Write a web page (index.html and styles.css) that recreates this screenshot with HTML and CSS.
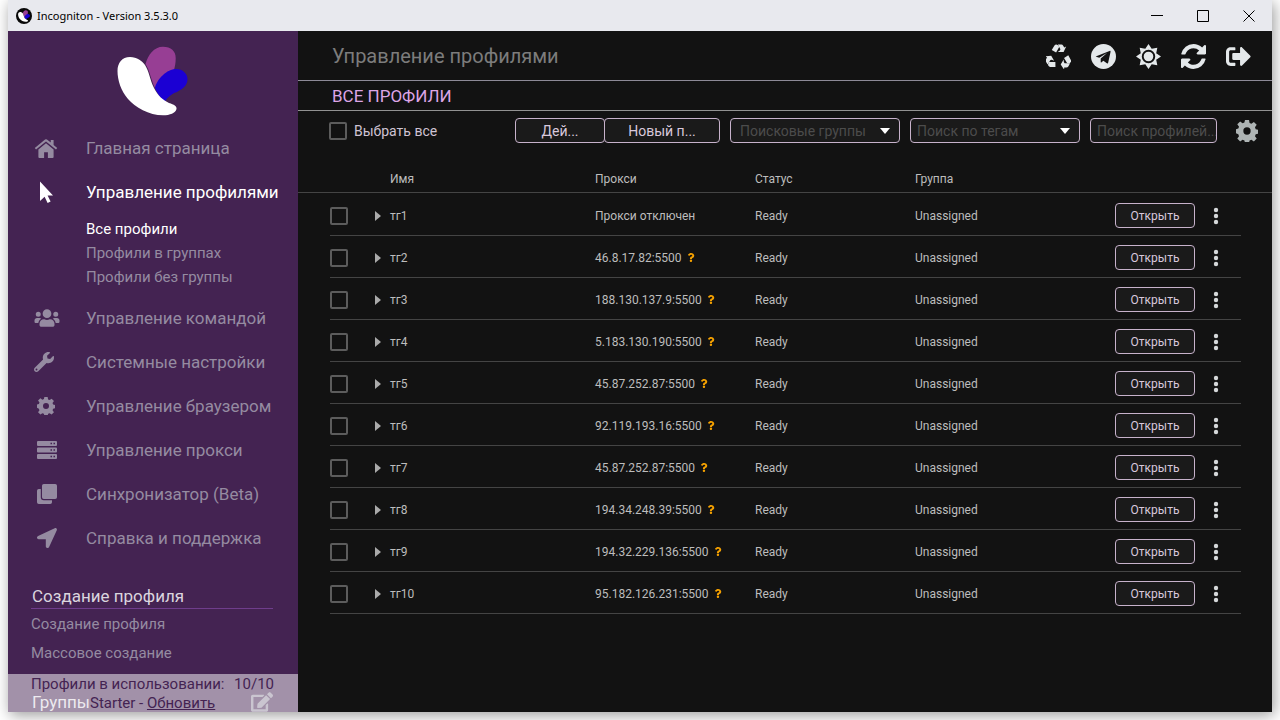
FILE: index.html
```
<!DOCTYPE html>
<html lang="ru">
<head>
  <meta charset="UTF-8">
  <title>Incogniton</title>
  <link rel="stylesheet" href="styles.css">
</head>
<body>

<!-- Shared icons -->
<svg class="sprite" aria-hidden="true">
  <symbol id="butterfly" viewBox="0 0 71 70">
    <path fill="#973e94" d="M28.500 18C31 9 37 .7 46 .7C54 .7 58.700 5 58.700 12C58.700 17 58 20 57 24L38 42C34 34 33 25 28.500 18Z"/>
    <path fill="#1b00d3" d="M38 42C40 33 50 23 59 23C66 23 70.500 28 70.500 33C70.500 40 65 43 60 46C54 48 50 52 48 55.500C43 52 40 47 38 42Z"/>
    <path fill="#fff" d="M.5 25C.5 17 5 11 13 11C20 11 25 15 28 19C32 25 33 34 37 42C41 50 46 54 52 57C57 58.500 60 60 59.500 63C58.500 67 53 69.300 46 69.300C32 69.300 18 61 11 53C4 45 .5 34 .5 25Z"/>
  </symbol>
  <symbol id="cog" viewBox="0 0 24 24">
    <path fill-rule="evenodd" d="M9.800 0h4.400l.6 3.300 2 .8 2.700-1.900 3.100 3.100-1.900 2.700.8 2 2.500.6v4.400l-2.500.6-.8 2 1.900 2.700-3.100 3.100-2.700-1.900-2 .8-.6 2.700H9.800l-.6-2.700-2-.8-2.700 1.900-3.100-3.100 1.900-2.700-.8-2L0 14.400V10l2.500-.6.8-2-1.900-2.700 3.100-3.100 2.700 1.900 2-.8zM12 8a4 4 0 1 0 0 8 4 4 0 0 0 0-8z"/>
  </symbol>
  <symbol id="question" viewBox="0 0 384 512">
    <path d="M202 0C122 0 70.500 32.700 29.900 91c-7.400 10.600-5.100 25.100 5.200 32.900l43.100 32.700c10.400 7.900 25.100 6 33.300-4.100 25-31.400 43.600-49.500 82.700-49.500 30.800 0 68.800 19.800 68.800 49.600 0 22.600-18.600 34.200-49 51.200-35.400 19.900-82.300 44.600-82.300 106.400V320c0 13.300 10.700 24 24 24h72.500c13.300 0 24-10.700 24-24v-5.800c0-42.900 125.300-44.600 125.300-160.600C377.500 66.300 286.900 0 202 0zM192 373.500a69.300 69.300 0 1 0 0 138.500 69.300 69.300 0 0 0 0-138.500z"/>
  </symbol>
  <symbol id="dots" viewBox="0 0 6 18">
    <circle cx="3" cy="3" r="2.200"/><circle cx="3" cy="9" r="2.200"/><circle cx="3" cy="15" r="2.200"/>
  </symbol>
  <symbol id="recycle" viewBox="0 0 26 26">
    <g id="recycle-arm">
      <path d="M6 6.300L8.800 1.600Q9.500.5 10.700.5Q12.300.6 13 1.900L13.700 3.200L10.500 8.800Z"/>
      <path d="M12.300.5H16Q17.200.5 17.900 1.700L19 3.700L21 2.600L18.300 8.300H12.200L14.400 6.800L15 5.500Z"/>
    </g>
    <use href="#recycle-arm" transform="rotate(120 13 14)"/>
    <use href="#recycle-arm" transform="rotate(240 13 14)"/>
  </symbol>
</svg>

<div class="window">

  <header class="titlebar">
    <span class="app-icon"><svg><use href="#butterfly"/></svg></span>
    <span class="app-title">Incogniton - Version 3.5.3.0</span>
    <div class="window-buttons">
      <button type="button" aria-label="Свернуть"><svg viewBox="0 0 12 12"><path d="M0 5.500h12"/></svg></button>
      <button type="button" aria-label="Развернуть"><svg viewBox="0 0 12 12"><path d="M.5 .5h11v11h-11z"/></svg></button>
      <button type="button" aria-label="Закрыть"><svg viewBox="0 0 12 12"><path d="M.5 .5l11 11M11.500 .5l-11 11"/></svg></button>
    </div>
  </header>

  <div class="app">

    <!-- Sidebar -->
    <aside class="sidebar">
      <svg class="logo" role="img" aria-label="Incogniton"><use href="#butterfly"/></svg>

      <nav class="menu">
        <a href="#"><svg class="icon home" viewBox="0 0 24 20"><path d="M12 4.500l8 6.600V19a1 1 0 0 1-1 1h-5v-6h-4v6H5a1 1 0 0 1-1-1v-7.900zM11 .5a1.700 1.700 0 0 1 2 0l4 3.300V1h3v5.300l3.800 3.100-1.300 1.600L12 2.500 1.500 11 .2 9.400z"/></svg>Главная страница</a>
        <a href="#" class="active"><svg class="icon cursor" viewBox="0 0 24 24"><path d="M6 1.500v19.500l4.600-4.300 3 6.200 3-1.300-3-6.200h5.400z"/></svg>Управление профилями</a>
        <div class="submenu">
          <a href="#" class="active">Все профили</a>
          <a href="#">Профили в группах</a>
          <a href="#">Профили без группы</a>
        </div>
        <a href="#"><svg class="icon wide" viewBox="0 0 640 512"><path d="M96 224a64 64 0 1 0 0-128 64 64 0 0 0 0 128zm448 0a64 64 0 1 0 0-128 64 64 0 0 0 0 128zm32 32h-64c-17.600 0-33.500 7.100-45.100 18.600 40.300 22.100 68.900 62 75.100 109.400h66c17.700 0 32-14.300 32-32v-32c0-35.300-28.700-64-64-64zm-256 0a112 112 0 1 0 0-224 112 112 0 0 0 0 224zm76.800 32h-8.300c-20.800 10-43.900 16-68.500 16s-47.600-6-68.500-16h-8.300C179.600 288 128 339.600 128 403.200V432c0 26.500 21.500 48 48 48h288c26.500 0 48-21.500 48-48v-28.800c0-63.600-51.600-115.200-115.200-115.200zm-223.700-13.400C161.500 263.100 145.600 256 128 256H64c-35.300 0-64 28.700-64 64v32c0 17.700 14.300 32 32 32h65.900c6.300-47.400 34.900-87.300 75.200-109.400z"/></svg>Управление командой</a>
        <a href="#"><svg class="icon wrench" viewBox="0 0 512 512"><path d="M507.700 109.100c-2.200-9-13.500-12.100-20.100-5.500l-74.400 74.400-67.900-11.300L334 98.900l74.400-74.400c6.600-6.600 3.400-17.900-5.700-20.200-47.400-11.700-99.600.9-136.600 37.900-39.600 39.600-50.500 97.100-34.100 147.200L18.700 402.800c-25 25-25 65.500 0 90.500s65.500 25 90.500 0l213.200-213.200c50.100 16.700 107.500 5.700 147.400-34.200 37.100-37.100 49.700-89.300 37.900-136.800zM64 472a24 24 0 1 1 0-48 24 24 0 0 1 0 48z"/></svg>Системные настройки</a>
        <a href="#"><svg class="icon cog"><use href="#cog"/></svg>Управление браузером</a>
        <a href="#"><svg class="icon server" viewBox="0 0 20 18"><path fill-rule="evenodd" d="M1 0h18a1 1 0 0 1 1 1v3a1 1 0 0 1-1 1H1a1 1 0 0 1-1-1V1a1 1 0 0 1 1-1zM13.500 1.800v1.500H15V1.800zM16.500 1.800v1.500H18V1.800zM1 6.500h18a1 1 0 0 1 1 1v3a1 1 0 0 1-1 1H1a1 1 0 0 1-1-1v-3a1 1 0 0 1 1-1zM13.500 8.300v1.500H15V8.300zM16.500 8.300v1.500H18V8.300zM1 13h18a1 1 0 0 1 1 1v3a1 1 0 0 1-1 1H1a1 1 0 0 1-1-1v-3a1 1 0 0 1 1-1zM13.500 14.800v1.500H15v-1.500zM16.500 14.800v1.500H18v-1.500z"/></svg>Управление прокси</a>
        <a href="#"><svg class="icon square" viewBox="0 0 20 20"><path d="M6.800 0h11.400Q20 0 20 1.800v11.400q0 1.800-1.800 1.800H6.800Q5 15 5 13.200V1.800Q5 0 6.800 0zM1.800 5H3.800v8.200q0 3 3 3H15v2q0 1.800-1.800 1.800H1.800Q0 20 0 18.200V6.800Q0 5 1.800 5z"/></svg>Синхронизатор (Beta)</a>
        <a href="#"><svg class="icon square" viewBox="0 0 20 20"><path d="M17.700.2L1.100 7.900C-.7 8.700-.2 11.200 1.700 11.200h7.100v7.100c0 1.900 2.600 2.400 3.300.6L19.800 2.300C20.400.9 19-.4 17.700.2z"/></svg>Справка и поддержка</a>
      </nav>

      <section class="side-group">
        <h2>Создание профиля</h2>
        <a href="#">Создание профиля</a>
        <a href="#">Массовое создание</a>
      </section>

      <section class="side-group groups">
        <h2>Группы</h2>
        <button type="button" aria-label="Изменить группы"><svg viewBox="0 0 576 512"><path d="M402.600 83.200l90.200 90.200c3.800 3.800 3.800 10 0 13.800L274.400 405.600l-92.800 10.300c-12.400 1.400-22.900-9.100-21.500-21.500l10.300-92.800L388.800 83.200c3.800-3.800 10-3.800 13.800 0zm162-22.900l-48.800-48.800c-15.200-15.200-39.900-15.200-55.200 0l-35.400 35.400c-3.800 3.800-3.800 10 0 13.800l90.200 90.200c3.800 3.800 10 3.800 13.800 0l35.400-35.400c15.200-15.300 15.200-40 0-55.200zM384 346.200V448H64V128h229.800c3.200 0 6.200-1.300 8.500-3.500l40-40c7.600-7.600 2.200-20.500-8.500-20.500H48C21.500 64 0 85.500 0 112v352c0 26.500 21.500 48 48 48h352c26.500 0 48-21.500 48-48V306.200c0-10.700-12.900-16-20.500-8.500l-40 40c-2.200 2.300-3.500 5.300-3.500 8.500z"/></svg></button>
      </section>

      <!-- Plan bar over the end of the list -->
      <div class="plan">
        <p><span>Профили в использовании:</span><span>10/10</span></p>
        <p class="plan-name">Starter - <a href="#">Обновить</a></p>
      </div>
    </aside>

    <!-- Profiles -->
    <main class="content">
      <div class="topbar">
        <h1>Управление профилями</h1>
        <div class="actions">
          <button type="button" aria-label="Корзина"><svg><use href="#recycle"/></svg></button>
          <button type="button" aria-label="Telegram"><svg viewBox="0 0 26 26"><circle cx="13" cy="13" r="13"/><path class="cut" d="M5.500 12.700L19.300 7.200q1.300-.4 1 1l-2.400 11.100q-.3 1.300-1.400.7l-3.700-2.700-1.800 1.800q-.8.5-.9-.5v-3.400l6.800-6.200-8.300 5.300-3.200-1q-1-.3.1-.6z"/></svg></button>
          <button type="button" aria-label="Тема"><svg viewBox="0 0 26 26"><path d="M13 0L16.300 5L22.200 3.800L21 9.700L26 13L21 16.300L22.200 22.200L16.300 21L13 26L9.700 21L3.800 22.200L5 16.300L0 13L5 9.700L3.800 3.800L9.700 5Z"/><circle class="ring" cx="13" cy="13" r="6"/></svg></button>
          <button type="button" aria-label="Обновить список"><svg viewBox="0 0 1536 1536"><path d="M1511 928q0 5-1 7-64 268-268 434.500t-478 166.500q-146 0-282.500-55t-243.500-157l-129 129q-19 19-45 19t-45-19-19-45v-448q0-26 19-45t45-19h448q26 0 45 19t19 45-19 45l-137 137q71 66 161 102t187 36q134 0 250-65t186-179q11-17 53-117 8-23 30-23h192q13 0 22.500 9.500t9.500 22.500zM1536 128v448q0 26-19 45t-45 19h-448q-26 0-45-19t-19-45 19-45l138-138q-148-137-349-137-134 0-250 65t-186 179q-11 17-53 117-8 23-30 23h-199q-13 0-22.500-9.500t-9.500-22.500v-7q65-268 270-434.500t480-166.500q146 0 284 55.500t245 156.500l130-129q19-19 45-19t45 19 19 45z"/></svg></button>
          <button type="button" aria-label="Выйти"><svg viewBox="0 0 512 512"><path d="M497 273L329 441c-15 15-41 4.500-41-17v-96H152c-13.300 0-24-10.700-24-24v-96c0-13.300 10.700-24 24-24h136V88c0-21.400 25.900-32 41-17l168 168c9.300 9.400 9.300 24.600 0 34zM192 436v-40c0-6.600-5.400-12-12-12H96c-17.700 0-32-14.300-32-32V160c0-17.700 14.300-32 32-32h84c6.600 0 12-5.400 12-12V76c0-6.600-5.400-12-12-12H96c-53 0-96 43-96 96v192c0 53 43 96 96 96h84c6.600 0 12-5.400 12-12z"/></svg></button>
        </div>
      </div>

      <h2 class="section-title">ВСЕ ПРОФИЛИ</h2>

      <div class="toolbar">
        <label class="select-all"><input type="checkbox"> Выбрать все</label>
        <div class="button-pair">
          <button type="button" class="btn btn-actions">Дей...</button>
          <button type="button" class="btn btn-new">Новый п...</button>
        </div>
        <div class="select">
          <select class="group-filter" aria-label="Поисковые группы"><option>Поисковые группы</option></select>
        </div>
        <div class="select">
          <select aria-label="Поиск по тегам"><option>Поиск по тегам</option></select>
        </div>
        <input type="text" class="search" placeholder="Поиск профилей..." aria-label="Поиск профилей">
        <button type="button" class="settings" aria-label="Настройки таблицы"><svg><use href="#cog"/></svg></button>
      </div>

      <table class="profiles">
        <thead>
          <tr>
            <th class="col-check"></th>
            <th class="col-name">Имя</th>
            <th class="col-proxy">Прокси</th>
            <th class="col-status">Статус</th>
            <th class="col-group">Группа</th>
            <th class="col-open"></th>
            <th class="col-more"></th>
          </tr>
        </thead>
        <tbody id="profileRows"></tbody>
      </table>
    </main>

  </div>
</div>

<script>
  const proxies = [
    '',
    '46.8.17.82:5500',
    '188.130.137.9:5500',
    '5.183.130.190:5500',
    '45.87.252.87:5500',
    '92.119.193.16:5500',
    '45.87.252.87:5500',
    '194.34.248.39:5500',
    '194.32.229.136:5500',
    '95.182.126.231:5500'
  ];

  // Render table rows
  document.getElementById('profileRows').innerHTML = proxies.map((proxy, i) => {
    const name = 'тг' + (i + 1);
    const proxyCell = proxy
      ? `${proxy}<svg class="question"><use href="#question"/></svg>`
      : 'Прокси отключен';

    return `
      <tr>
        <td class="col-check"><input type="checkbox" aria-label="Выбрать ${name}"></td>
        <td><div class="name"><button type="button" class="expand" aria-label="Развернуть ${name}"></button>${name}</div></td>
        <td>${proxyCell}</td>
        <td>Ready</td>
        <td>Unassigned</td>
        <td><button type="button" class="btn btn-open">Открыть</button></td>
        <td><button type="button" class="more" aria-label="Меню ${name}"><svg><use href="#dots"/></svg></button></td>
      </tr>`;
  }).join('');
</script>

</body>
</html>
```
FILE: styles.css
```
* { box-sizing: border-box; }

body {
  margin: 0;
  padding: 0 8px 8px;
  height: 100vh;
  background: #fff;
  font-family: Roboto, sans-serif;
  font-size: 12px;
  color: #bdbdbd;
  overflow: hidden;
}
h1, h2, p { margin: 0; font-weight: 400; }
a { color: inherit; text-decoration: none; }
button { margin: 0; padding: 0; border: 0; background: none; font: inherit; color: inherit; }
svg { display: block; fill: currentColor; }
.sprite { display: none; }

.window {
  display: flex;
  flex-direction: column;
  height: 100%;
  background: #121212;
  box-shadow: 2px 3px 14px rgba(0, 0, 0, 0.4);
}

/* Title bar */
.titlebar {
  display: flex;
  align-items: center;
  flex: none;
  height: 31px;
  padding-left: 8px;
  background: #e8e9ee;
  color: #000;
}
.app-icon { display: grid; place-items: center; width: 16px; height: 16px; border-radius: 50%; background: #080808; }
.app-icon svg { width: 12px; height: 12px; }
.app-title { margin-left: 5px; font-family: "Noto Sans", sans-serif; font-size: 11px; }
.window-buttons { display: flex; margin-left: auto; }
.window-buttons button { display: grid; place-items: center; width: 46px; height: 31px; }
.window-buttons svg { width: 12px; height: 12px; fill: none; stroke: #000; }

.app { display: flex; flex: 1; min-height: 0; }

/* Sidebar */
.sidebar {
  position: relative;
  flex: none;
  width: 290px;
  overflow: hidden;
  background: #442352;
  color: #958ba1;
}
.logo { width: 71px; height: 70px; margin: 15px 0 10px 109px; }
.menu > a { display: flex; align-items: center; height: 44px; padding-left: 26px; font-size: 17px; white-space: nowrap; }
.menu .active { color: #fff; }
.icon { flex: none; width: 24px; height: 20px; margin-right: 28px; }
.icon.home { height: 19px; }
.icon.cursor { height: 24px; }
.icon.cog { height: 18px; }
.icon.wide { width: 26px; margin-right: 26px; }
.icon.wrench { width: 20px; margin-right: 32px; }
.icon.server { width: 26px; height: 18px; margin-right: 26px; }
.icon.square { width: 26px; margin-right: 26px; }
.submenu { padding: 3px 0 7px 78px; font-size: 15px; line-height: 24px; }
.submenu a { display: block; }

.side-group { margin: 22px 25px 0 23px; }
.side-group h2 {
  margin-bottom: 1px;
  padding: 2px 1px 0;
  border-bottom: 1px solid #6f3d8c;
  font-size: 17px;
  line-height: 24px;
  color: #dad5de;
}
.side-group a { display: block; font-size: 15px; line-height: 29px; }
.side-group.groups { display: flex; align-items: center; justify-content: space-between; margin-top: 20px; }
.groups h2 { border: 0; }
.groups svg { width: 22px; height: 20px; }

.plan {
  position: absolute;
  left: 0;
  right: 0;
  bottom: 0;
  height: 38px;
  padding: 1px 24px 0 23px;
  background: rgba(255, 255, 255, 0.5);
  color: #442352;
  font-size: 15px;
  line-height: 19px;
}
.plan p { display: flex; justify-content: space-between; }
.plan .plan-name { display: block; padding-left: 59px; }
.plan a { text-decoration: underline; }

/* Content */
.content { flex: 1; min-width: 0; }
.topbar {
  display: flex;
  align-items: center;
  justify-content: space-between;
  height: 50px;
  padding: 1px 21px 0 34px;
  border-bottom: 1px solid #8d8a97;
}
.topbar h1 { font-size: 20px; color: #7c7c7c; }
.actions { display: flex; gap: 20px; color: #e4e8ea; }
.actions svg { width: 25px; height: 25px; }
.actions .cut { fill: #121212; }
.actions .ring { fill: none; stroke: #121212; stroke-width: 2; }
.section-title {
  padding: 2px 0 0 34px;
  border-bottom: 1px solid #929292;
  font-size: 17px;
  line-height: 27px;
  color: #dda5e6;
}

.toolbar { display: flex; align-items: center; height: 39px; padding: 0 14px 0 31px; font-size: 14px; }
.select-all { display: flex; align-items: center; gap: 7px; margin-right: auto; color: #cfc3d3; }
.button-pair { display: flex; }

input[type="checkbox"] {
  appearance: none;
  display: block;
  width: 18px;
  height: 18px;
  margin: 0;
  border: 2px solid #5c5c5c;
  border-radius: 2px;
}

.btn, .select select, .search {
  height: 25px;
  border: 1px solid #c7b2cb;
  border-radius: 4px;
  background: #1a1a1a;
  color: #d8c8dc;
}
.btn-actions { width: 90px; }
.btn-new { width: 116px; margin-left: -1px; }
.select { position: relative; width: 170px; margin-left: 10px; }
.select select {
  display: block;
  appearance: none;
  width: 100%;
  padding: 0 24px 0 6px;
  font: inherit;
  color: #4c4c4c;
}
.select .group-filter { padding-left: 9px; }
.select::after {
  content: "";
  position: absolute;
  top: 10px;
  right: 10px;
  border: 5px solid transparent;
  border-top: 6px solid #fff;
  border-bottom: 0;
  pointer-events: none;
}
.search { width: 127px; margin-left: 10px; padding: 0 0 0 6px; font: inherit; }
.search::placeholder { color: #4c4c4c; }
.settings { margin-left: 19px; color: #aeb4b4; }
.settings svg { width: 22px; height: 22px; }

/* Profiles table */
.profiles { width: 100%; table-layout: fixed; border-spacing: 0; }
.profiles th, .profiles td { padding: 0; text-align: left; font-weight: 400; }
.profiles th { height: 43px; padding-top: 16px; border-bottom: 1px solid #444; }
.profiles td { height: 42px; padding-top: 1px; }
.profiles tbody::before { content: ""; display: block; height: 1px; }
.profiles tbody tr {
  background: linear-gradient(#444, #444) no-repeat 32px 100% / calc(100% - 63px) 1px;
}
.profiles .col-check { width: 77px; padding-left: 32px; }
.profiles .col-name { width: 220px; padding-left: 15px; }
.col-proxy, .col-status { width: 160px; }
.col-open { width: 80px; }
.col-more { width: 77px; }

.name { display: flex; align-items: center; }
.expand {
  margin-right: 9px;
  border: 5px solid transparent;
  border-left: 6px solid #aaa;
  border-right: 0;
}
.question { display: inline-block; width: 8px; height: 9px; margin-left: 5px; color: #f5a100; }
.btn-open { display: block; width: 80px; }
.more { display: block; margin-left: 18px; color: #d5d8da; }
.more svg { width: 6px; height: 18px; }
```
